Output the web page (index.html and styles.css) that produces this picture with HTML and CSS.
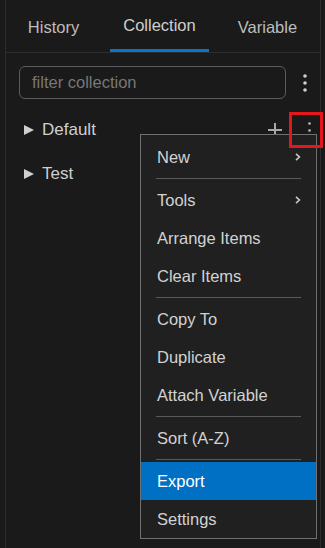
FILE: index.html
```html
<!DOCTYPE html>
<html lang="en">
<head>
  <meta charset="UTF-8" />
  <meta name="viewport" content="width=device-width, initial-scale=1" />
  <title>Collection</title>
  <link rel="stylesheet" href="styles.css">
</head>
<body>
  <div class="panel">
    <nav class="tabs">
      <div class="tab">History</div>
      <div class="tab active">Collection</div>
      <div class="tab">Variable</div>
    </nav>

    <div class="toolbar">
      <input class="filter" type="text" placeholder="filter collection">
      <button class="kebab" aria-label="More">
        <svg width="4" height="18" viewBox="0 0 4 18"><circle cx="2" cy="2" r="1.8"/><circle cx="2" cy="9" r="1.8"/><circle cx="2" cy="16" r="1.8"/></svg>
      </button>
    </div>

    <ul class="tree">
      <li class="node">
        <span class="caret"></span>
        <span class="name">Default</span>
        <span class="actions">
          <svg class="plus" width="14" height="14" viewBox="0 0 14 14"><path d="M7 0v14M0 7h14"/></svg>
          <svg class="dots" width="3" height="17" viewBox="0 0 3 17"><circle cx="1.5" cy="1.5" r="1.3"/><circle cx="1.5" cy="8.5" r="1.3"/><circle cx="1.5" cy="15.5" r="1.3"/></svg>
        </span>
      </li>
      <li class="node">
        <span class="caret"></span>
        <span class="name">Test</span>
      </li>
    </ul>
  </div>

  <!-- highlight around the row menu button -->
  <div class="callout"></div>

  <div class="menu">
    <div class="item">New <svg class="chev" width="6" height="8" viewBox="0 0 6 8"><path d="M1 0.8l3.4 3.2L1 7.2"/></svg></div>
    <div class="sep"></div>
    <div class="item">Tools <svg class="chev" width="6" height="8" viewBox="0 0 6 8"><path d="M1 0.8l3.4 3.2L1 7.2"/></svg></div>
    <div class="item">Arrange Items</div>
    <div class="item">Clear Items</div>
    <div class="sep"></div>
    <div class="item">Copy To</div>
    <div class="item">Duplicate</div>
    <div class="item">Attach Variable</div>
    <div class="sep"></div>
    <div class="item">Sort (A-Z)</div>
    <div class="sep"></div>
    <div class="item selected">Export</div>
    <div class="item">Settings</div>
  </div>
</body>
</html>
```

FILE: styles.css
```css
body {
  margin: 0;
  background: #1a1a1a;
  color: #cccccc;
  font-family: 'Liberation Sans', Arial, sans-serif;
  font-size: 16.5px;
}
.panel {
  margin-left: 5px;
  width: 316px;
  height: 548px;
  border-left: 1px solid #2d2d2d;
  border-right: 1px solid #2d2d2d;
  box-sizing: border-box;
}
.tabs {
  display: flex;
  height: 53px;
  border-bottom: 1px solid #2d2d2d;
  box-sizing: border-box;
}
.tab {
  width: 99px;
  display: flex;
  align-items: center;
  justify-content: center;
  padding-top: 2px;
  color: #bdbdbd;
  box-sizing: border-box;
}
.tab:first-child {
  width: 95px;
  margin-right: 9px;
}
.tab:last-child {
  margin-left: 9px;
}
.tab.active {
  color: #cfcfcf;
  border-bottom: 3px solid #0a74c8;
}
.toolbar {
  display: flex;
  align-items: center;
  padding: 13px 0 0 13px;
}
.filter {
  width: 267px;
  height: 33px;
  box-sizing: border-box;
  background: transparent;
  border: 1px solid #5c5c5c;
  border-radius: 6px;
  padding: 0 12px;
  font: inherit;
  color: #ccc;
  outline: none;
}
.filter::placeholder {
  color: #777;
}
.kebab {
  background: none;
  border: 0;
  padding: 0;
  margin-left: 17px;
  display: flex;
  fill: #cfcfcf;
}
.tree {
  list-style: none;
  margin: 9px 0 0;
  padding: 0;
}
.node {
  display: flex;
  align-items: center;
  height: 44px;
  padding-left: 18px;
  color: #cfcfcf;
}
.caret {
  width: 0;
  height: 0;
  border-top: 5.5px solid transparent;
  border-bottom: 5.5px solid transparent;
  border-left: 10px solid #cfcfcf;
  margin-right: 8px;
}
.name {
  flex: 1;
  font-size: 17px;
}
.actions {
  display: flex;
  align-items: center;
  margin-right: 9px;
}
.plus {
  stroke: #a8a8a8;
  stroke-width: 2;
  margin-right: 26px;
}
.dots {
  fill: #bdbdbd;
}
.callout {
  position: absolute;
  left: 289px;
  top: 112px;
  width: 34px;
  height: 36px;
  border: 3px solid #e5161d;
  box-sizing: border-box;
  z-index: 2;
}
.menu {
  position: absolute;
  left: 140px;
  top: 134px;
  width: 177px;
  box-sizing: border-box;
  padding-top: 3px;
  background: #202020;
  border: 1px solid #707070;
}
.item {
  height: 38px;
  display: flex;
  align-items: center;
  justify-content: space-between;
  padding: 0 15px 0 16px;
  color: #d2d2d2;
}
.item.selected {
  background: #0070c4;
  color: #fff;
}
.chev {
  fill: none;
  stroke: #c8c8c8;
  stroke-width: 1.6;
}
.sep {
  height: 1px;
  margin: 2px 15px;
  background: #5a5a5a;
}
```
